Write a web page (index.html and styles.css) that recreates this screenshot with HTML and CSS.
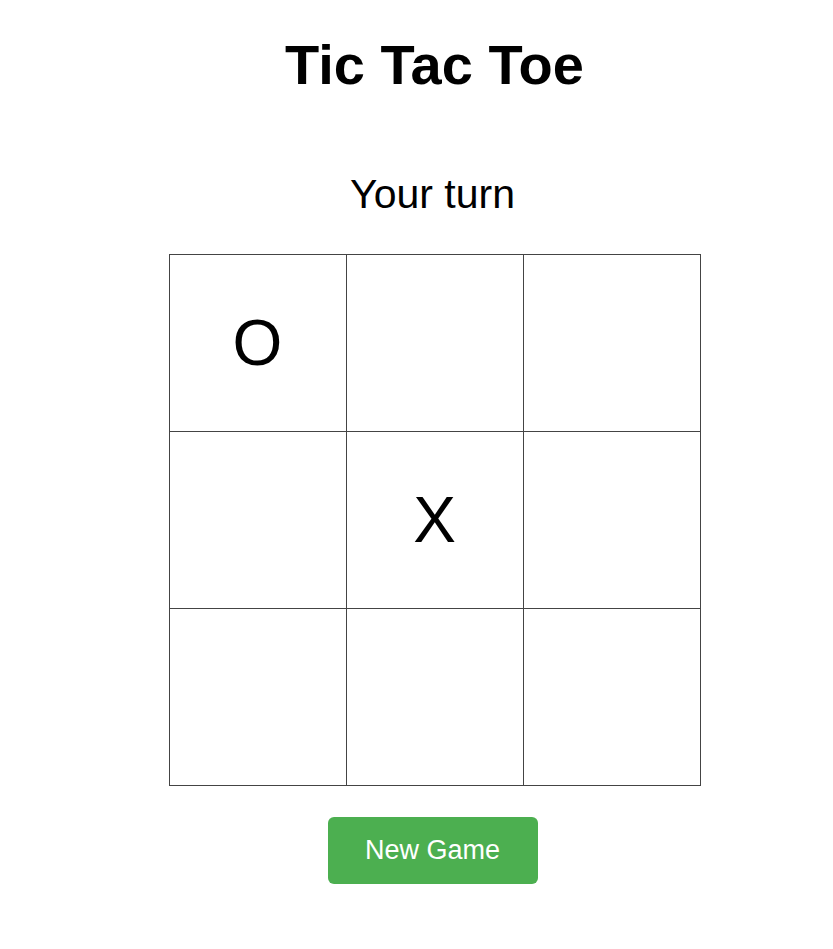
FILE: index.html
```html
<!DOCTYPE html>
<html>
<head>
<meta charset="utf-8">
<link rel="stylesheet" href="styles.css">
</head>
<body>
<main class="game">
  <h1 class="title">Tic Tac Toe</h1>
  <div class="status">Your turn</div>
  <div class="board">
    <div class="cell">O</div>
    <div class="cell"></div>
    <div class="cell"></div>
    <div class="cell"></div>
    <div class="cell">X</div>
    <div class="cell"></div>
    <div class="cell"></div>
    <div class="cell"></div>
    <div class="cell"></div>
  </div>
  <button class="new-game">New Game</button>
</main>
</body>
</html>
```
FILE: styles.css
```css
html, body {
  margin: 0;
  padding: 0;
  background: #fff;
}
body {
  font-family: "Liberation Sans", Arial, sans-serif;
  color: #000;
}
.game {
  display: flex;
  flex-direction: column;
  align-items: center;
  padding-top: 34px;
  padding-left: 36px;
}
.title {
  margin: 0;
  font-size: 56px;
  font-weight: bold;
  line-height: 62px;
}
.status {
  margin-top: 75px;
  margin-right: 4px;
  font-size: 41px;
  line-height: 46px;
}
.board {
  margin-top: 37px;
  display: grid;
  grid-template-columns: repeat(3, 176px);
  grid-template-rows: repeat(3, 176px);
  gap: 1px;
  padding: 1px;
  background: #444;
}
.cell {
  background: #fff;
  display: flex;
  align-items: center;
  justify-content: center;
  font-size: 64px;
}
.new-game {
  margin-top: 31px;
  margin-right: 4px;
  width: 210px;
  height: 67px;
  border: none;
  border-radius: 6px;
  background: #4caf50;
  color: #fff;
  font-family: "Liberation Sans", Arial, sans-serif;
  font-size: 27px;
  padding: 0;
}
```
